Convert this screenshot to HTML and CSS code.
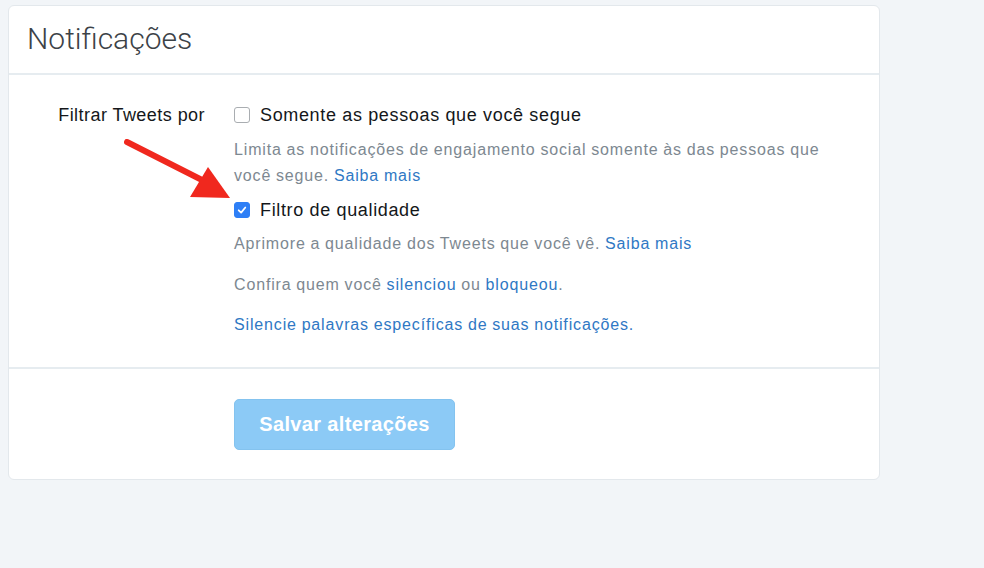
FILE: index.html
```html
<!DOCTYPE html>
<html lang="pt">
<head>
<meta charset="utf-8">
<title>Notificações</title>
<link rel="stylesheet" href="styles.css">
</head>
<body>
<div class="card">
  <div class="card-header">
    <h1 class="title">Notificações</h1>
  </div>
  <div class="card-body">
    <div class="form-row">
      <div class="label">Filtrar Tweets por</div>
      <div class="controls">
        <label class="check">
          <span class="box"></span>
          <span class="check-text">Somente as pessoas que você segue</span>
        </label>
        <p class="desc desc-first">Limita as notificações de engajamento social somente às das pessoas que você segue. <a class="link">Saiba mais</a></p>
        <label class="check check-second">
          <span class="box box-on">
            <svg viewBox="0 0 16 16" width="16" height="16"><path d="M4.2 8.3 L7 11 L11.8 5.2" fill="none" stroke="#fff" stroke-width="2" stroke-linecap="round" stroke-linejoin="round"/></svg>
          </span>
          <span class="check-text">Filtro de qualidade</span>
        </label>
        <p class="desc desc-after">Aprimore a qualidade dos Tweets que você vê. <a class="link">Saiba mais</a></p>
        <p class="desc desc-gap">Confira quem você <a class="link">silenciou</a> ou <a class="link">bloqueou</a>.</p>
        <p class="desc desc-gap2"><a class="link">Silencie palavras específicas de suas notificações.</a></p>
      </div>
    </div>
    <svg class="arrow" viewBox="0 0 120 70" width="120" height="70">
      <path d="M3 3 L78 41" stroke="#f0281e" stroke-width="6" stroke-linecap="round" fill="none"/>
      <polygon points="106,59 66,58 84,28" fill="#f0281e"/>
    </svg>
  </div>
  <div class="card-footer">
    <button class="btn" type="button">Salvar alterações</button>
  </div>
</div>
</body>
</html>
```
FILE: styles.css
```css
html, body {
  margin: 0;
  padding: 0;
}
body {
  background: #f2f5f8;
  font-family: "Liberation Sans", Arial, sans-serif;
  width: 984px;
  height: 568px;
  overflow: hidden;
  padding-top: 5px;
  padding-left: 8px;
  box-sizing: border-box;
}
.card {
  width: 872px;
  background: #fff;
  border: 1px solid #e3e8ec;
  border-radius: 6px;
  box-sizing: border-box;
}
.card-header {
  height: 69px;
  border-bottom: 2px solid #e6ecf0;
  box-sizing: border-box;
  padding-left: 18px;
  display: flex;
  align-items: center;
}
.title {
  margin: 0;
  font-family: Roboto, "Liberation Sans", sans-serif;
  font-weight: 300;
  font-size: 30px;
  color: #3c4247;
  letter-spacing: 0;
  padding-bottom: 2px;
}
.card-body {
  position: relative;
  padding: 30px 0 29px 0;
  border-bottom: 2px solid #e6ecf0;
}
.form-row {
  display: flex;
}
.label {
  width: 196px;
  text-align: right;
  font-size: 18px;
  letter-spacing: 0.45px;
  color: #14171a;
  line-height: 20px;
}
.controls {
  margin-left: 29px;
  width: 620px;
}
.check {
  display: flex;
  align-items: center;
  height: 20px;
}
.box {
  width: 14px;
  height: 14px;
  border: 1px solid #a9adb1;
  border-radius: 3px;
  background: #fff;
  box-sizing: content-box;
  display: flex;
  align-items: center;
  justify-content: center;
}
.box-on {
  background: #2e7ff6;
  border-color: #2e7ff6;
}
.box-on svg {
  width: 14px;
  height: 14px;
}
.check-text {
  margin-left: 10px;
  font-size: 18px;
  letter-spacing: 0.65px;
  color: #14171a;
}
.desc {
  margin: 0;
  font-size: 16px;
  letter-spacing: 0.85px;
  word-spacing: -0.5px;
  line-height: 26px;
  color: #7d8891;
}
.desc-first {
  margin-top: 12px;
}
.check-second {
  margin-top: 11px;
}
.desc-after {
  margin-top: 11px;
}
.desc-gap {
  margin-top: 15px;
}
.desc-gap2 {
  margin-top: 14px;
}
.link {
  color: #2f78c4;
  text-decoration: none;
}
.arrow {
  position: absolute;
  left: 115px;
  top: 64px;
}
.card-footer {
  padding: 30px 0 29px 225px;
}
.btn {
  width: 221px;
  height: 51px;
  background: #8ccaf6;
  border: 1px solid #84c3ef;
  border-radius: 5px;
  color: #fff;
  font-family: "Liberation Sans", Arial, sans-serif;
  font-weight: bold;
  font-size: 20px;
  letter-spacing: 0.35px;
  padding: 0;
  display: block;
}
```
